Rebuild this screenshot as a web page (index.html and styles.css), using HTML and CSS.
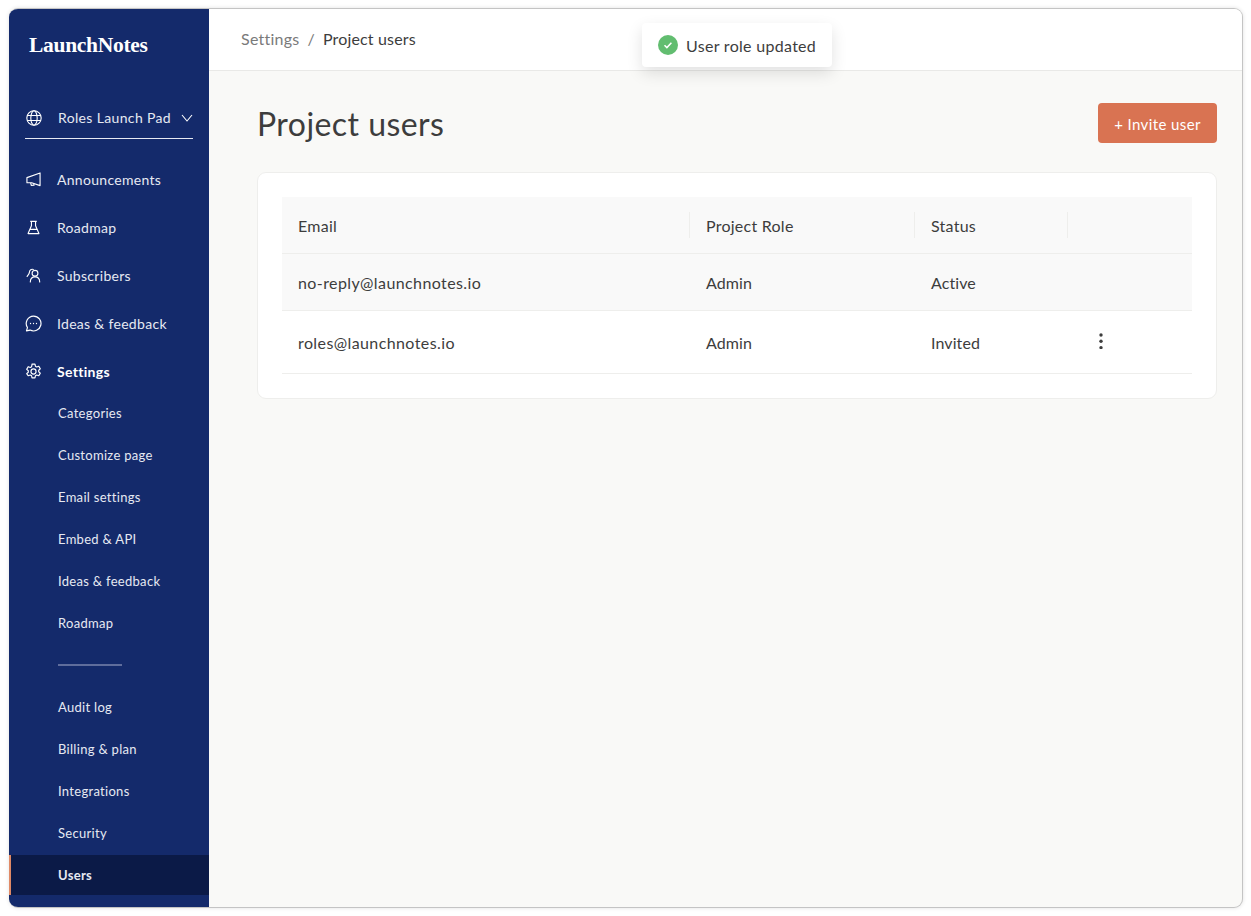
FILE: index.html
```html
<!DOCTYPE html>
<html lang="en">
<head>
<meta charset="utf-8">
<title>Project users</title>
<link rel="stylesheet" href="styles.css">
</head>
<body>
<div class="app">
  <aside class="sidebar">
    <div class="logo">LaunchNotes</div>
    <div class="project">
      <svg class="project-globe" viewBox="0 0 16 16" fill="none" stroke="#fff" stroke-width="1.1"><circle cx="8" cy="8" r="7.2"/><ellipse cx="8" cy="8" rx="3.2" ry="7.2"/><path d="M1.2 5.5h13.6M1.2 10.5h13.6"/></svg>
      <span class="project-name">Roles Launch Pad</span>
      <svg class="project-chevron" viewBox="0 0 12 8" fill="none" stroke="#fff" stroke-width="1.1"><path d="M1 1l5 6 5-6"/></svg>
    </div>
    <nav class="nav">
      <a class="nav-item"><svg class="nav-icon" viewBox="0 0 16 16" fill="none" stroke="#fff" stroke-width="1.2" stroke-linejoin="round"><path d="M15 1v13.5l-9-3H1V6L15 1z"/><path d="M5 11.5l.6 2.8 3-.1-.3-1.8"/></svg>Announcements</a>
      <a class="nav-item"><svg class="nav-icon" viewBox="0 0 16 16" fill="none" stroke="#fff" stroke-width="1.2" stroke-linejoin="round"><path d="M4.5 1.5h7M5.8 1.5v4.7L2.2 14.5h11.6L10.2 6.2V1.5M4.2 10h7.6"/></svg>Roadmap</a>
      <a class="nav-item"><svg class="nav-icon" viewBox="0 0 16 16" fill="none" stroke="#fff" stroke-width="1.2" stroke-linecap="round"><circle cx="9.6" cy="5.6" r="3.1"/><path d="M4.6 14.8c0-3.2 2-5.4 5-5.4s5 2.2 5 5.4M7.8 1.6C5.8.8 3.8 2 3.7 4.4 3.6 6.2 2.4 7.4 1.2 9"/></svg>Subscribers</a>
      <a class="nav-item"><svg class="nav-icon nav-icon-lg" viewBox="0 0 16 16" fill="none" stroke="#fff" stroke-width="1.1" stroke-linejoin="round"><path d="M8 1a7 7 0 1 1-3.2 13.2L1.4 15l.9-3.2A7 7 0 0 1 8 1z"/><circle cx="5.2" cy="8" r=".6" fill="#fff" stroke="none"/><circle cx="8" cy="8" r=".6" fill="#fff" stroke="none"/><circle cx="10.8" cy="8" r=".6" fill="#fff" stroke="none"/></svg>Ideas &amp; feedback</a>
      <a class="nav-item nav-item-strong"><svg class="nav-icon nav-icon-lg" viewBox="0 0 16 16" fill="none" stroke="#fff" stroke-width="1.1" stroke-linejoin="round"><circle cx="8" cy="8" r="2.4"/><path d="M6.6 1h2.8l.4 2 1.2.7 2-.7 1.4 2.5-1.5 1.3v1.4l1.5 1.3-1.4 2.5-2-.7-1.2.7-.4 2H6.6l-.4-2-1.2-.7-2 .7L1.6 10l1.5-1.3V7.3L1.6 6 3 3.5l2 .7 1.2-.7.4-2z"/></svg>Settings</a>
    </nav>
    <nav class="subnav">
      <a class="sub-item">Categories</a>
      <a class="sub-item">Customize page</a>
      <a class="sub-item">Email settings</a>
      <a class="sub-item">Embed &amp; API</a>
      <a class="sub-item">Ideas &amp; feedback</a>
      <a class="sub-item">Roadmap</a>
      <div class="sub-divider"></div>
      <a class="sub-item">Audit log</a>
      <a class="sub-item">Billing &amp; plan</a>
      <a class="sub-item">Integrations</a>
      <a class="sub-item">Security</a>
      <a class="sub-item sub-item-active">Users</a>
    </nav>
  </aside>
  <div class="content">
    <header class="topbar">
      <span class="crumb-parent">Settings</span>
      <span class="crumb-sep">/</span>
      <span class="crumb-current">Project users</span>
    </header>
    <main class="main">
      <div class="page-head">
        <h1 class="page-title">Project users</h1>
        <button class="invite-btn">+ Invite user</button>
      </div>
      <section class="card">
        <table class="users">
          <thead>
            <tr>
              <th class="col-email"><span class="th-cell">Email</span></th>
              <th class="col-role"><span class="th-cell">Project Role</span></th>
              <th class="col-status"><span class="th-cell">Status</span></th>
              <th class="col-actions"></th>
            </tr>
          </thead>
          <tbody>
            <tr class="row-shaded">
              <td class="cell-email">no-reply@launchnotes.io</td><td>Admin</td><td>Active</td><td></td>
            </tr>
            <tr class="row-plain">
              <td class="cell-email">roles@launchnotes.io</td><td>Admin</td><td>Invited</td>
              <td><svg class="kebab" viewBox="0 0 4 16" fill="#3d3d3d"><circle cx="2" cy="2" r="1.7"/><circle cx="2" cy="8.2" r="1.7"/><circle cx="2" cy="14.6" r="1.7"/></svg></td>
            </tr>
          </tbody>
        </table>
      </section>
    </main>
    <div class="toast">
      <svg class="toast-icon" viewBox="0 0 20 20"><circle cx="10" cy="10" r="10" fill="#62bd70"/><path d="M6.5 10.3l2.4 2.3 4.5-4.8" fill="none" stroke="#fff" stroke-width="1.5"/></svg>
      <span>User role updated</span>
    </div>
  </div>
</div>
</body>
</html>
```
FILE: styles.css
```css
* { box-sizing: border-box; }
html, body { height: 100%; }
body {
  margin: 0;
  padding: 8px 8px 8px 9px;
  background: #fff;
  font-family: "Lato", "Liberation Sans", sans-serif;
  color: #3d3d3d;
}
.app {
  display: flex;
  height: 900px;
  border: 1px solid #c4c4c4;
  border-left: 0;
  border-radius: 9px;
  overflow: hidden;
  background: #f9f9f7;
  box-shadow: 0 0 4px rgba(0,0,0,.12);
}
.sidebar {
  width: 200px;
  flex: none;
  background: #142a6b;
  color: #e6e9f2;
}
.logo {
  padding: 23px 0 0 20px;
  height: 82px;
  font: bold 21.5px/26px "Liberation Serif", serif;
  letter-spacing: -.3px;
  color: #fff;
}
.project {
  display: flex;
  align-items: center;
  margin: 0 16px;
  height: 48px;
  padding: 7px 0 0;
  border-bottom: 1px solid #e6e9f2;
  font-size: 14px;
}
.project-globe { width: 16px; height: 16px; margin: 0 16px 0 1px; }
.project-name { flex: 1; letter-spacing: .35px; white-space: nowrap; line-height: 16px; padding-bottom: 1px; }
.project-chevron { width: 12px; height: 8px; }
.nav { padding-top: 16px; }
.nav-item {
  display: flex;
  align-items: center;
  height: 48px;
  padding-left: 16px;
  font-size: 14px;
  letter-spacing: .3px;
}
.nav-icon { width: 15px; height: 15px; margin: 0 16px 0 1px; flex: none; }
.nav-icon-lg { width: 17px; height: 17px; margin: 0 15px 0 0; }
.nav-item-strong { font-weight: 700; color: #fff; }
.subnav { margin-top: -3px; }
.sub-item {
  display: flex;
  align-items: center;
  height: 42px;
  padding-left: 49px;
  font-size: 13px;
  letter-spacing: .3px;
}
.sub-divider { height: 42px; margin-left: 49px; width: 64px; }
.sub-divider::after {
  content: "";
  display: block;
  height: 2px;
  background: #5f6d9c;
  transform: translateY(20px);
}
.sub-item-active {
  height: 40px;
  margin-top: 1px;
  background: #0b1a47;
  border-left: 2px solid #e08a66;
  padding-left: 47px;
  font-weight: 700;
}
.content { flex: 1; min-width: 0; position: relative; display: flex; flex-direction: column; }
.topbar {
  display: flex;
  align-items: center;
  gap: 8px;
  height: 62px;
  flex: none;
  padding: 0 0 2px 32px;
  background: #fff;
  border-bottom: 1px solid #e9e9e7;
  font-size: 16px;
  letter-spacing: .25px;
}
.crumb-parent, .crumb-sep { color: #7a7a7a; }
.crumb-current { letter-spacing: .15px; }
.main { padding: 32px 25px 0 48px; }
.page-head { display: flex; justify-content: space-between; align-items: center; height: 40px; margin-bottom: 29px; }
.page-title { margin: 0; font-size: 32px; font-weight: 400; letter-spacing: .45px; }
.invite-btn {
  width: 119px;
  height: 40px;
  padding: 1px 0 0;
  border: 0;
  border-radius: 4px;
  background: #d97352;
  color: #fff;
  font: 15px "Lato", sans-serif;
  letter-spacing: .4px;
}
.card {
  height: 227px;
  padding: 24px;
  background: #fff;
  border: 1px solid #eeeeec;
  border-radius: 9px;
}
.users { width: 910px; border-collapse: collapse; table-layout: fixed; font-size: 16px; letter-spacing: .1px; }
.col-email { width: 408px; }
.col-role { width: 225px; }
.col-status { width: 153px; }
th { height: 56px; padding: 0; font-weight: 400; letter-spacing: .25px; text-align: left; background: #f9f9f9; border-bottom: 1px solid #eeeeec; }
.th-cell { display: flex; align-items: center; height: 26px; padding: 1px 0 0 16px; border-right: 1px solid #eeeeec; }
td { padding: 1px 0 0 16px; border-bottom: 1px solid #eeeeec; }
.cell-email { letter-spacing: .4px; }
.row-shaded td { height: 57px; background: #f9f9f9; }
.row-plain td { height: 63px; }
.kebab { display: block; width: 4px; height: 16px; margin: -3px 0 0 15px; }
.toast {
  position: absolute;
  top: 14px;
  left: 433px;
  display: flex;
  align-items: center;
  gap: 8px;
  width: 190px;
  height: 44px;
  padding-left: 16px;
  background: #fff;
  border-radius: 4px;
  box-shadow: 0 6px 16px rgba(0,0,0,.12);
  font-size: 16px;
  letter-spacing: .3px;
}
.toast-icon { width: 20px; height: 20px; flex: none; }
```
